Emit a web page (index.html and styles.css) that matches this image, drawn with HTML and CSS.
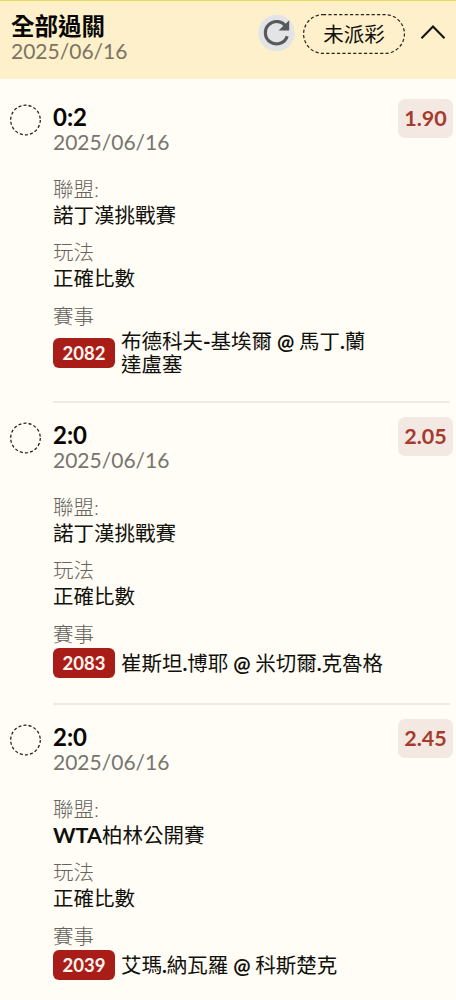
FILE: index.html
```html
<!DOCTYPE html>
<html lang="zh-Hant">
<head>
<meta charset="utf-8">
<title>全部過關</title>
<link rel="stylesheet" href="styles.css">
</head>
<body>
<header class="header">
  <div class="header-text">
    <h1 class="title">全部過關</h1>
    <div class="date">2025/06/16</div>
  </div>
  <button class="refresh" aria-label="重新整理">
    <svg width="37" height="38" viewBox="0 0 37 38"><circle cx="18.5" cy="19" r="18.3" fill="#e3e4e6"/><path d="M28.3 13.2A11.2 11.2 0 1 0 29.2 22.2" fill="none" stroke="#58595b" stroke-width="3.2"/><path d="M31.2 6.2V16.6H20.6Z" fill="#58595b"/></svg>
  </button>
  <div class="status"><svg class="outline" width="102" height="40"><rect x=".6" y=".6" width="100.8" height="38.8" rx="19.4" fill="none" stroke="#29251b" stroke-width="1.2" stroke-dasharray="3.2 2.2"/></svg><span>未派彩</span></div>
  <svg class="chevron" width="26" height="16" viewBox="0 0 26 16"><path d="M1.5 14.2 13 2.4 24.5 14.2" fill="none" stroke="#171510" stroke-width="2.1"/></svg>
</header>
<main class="bets">
  <section class="bet">
    <svg class="radio" width="31" height="32"><circle cx="15.5" cy="16" r="14.8" fill="none" stroke="#29251b" stroke-width="1.3" stroke-dasharray="3.05 2.12"/></svg>
    <div class="body">
      <div class="top"><div><h2 class="pick">0:2</h2><div class="date">2025/06/16</div></div><div class="odds">1.90</div></div>
      <dl class="facts">
        <div class="fact"><dt>聯盟:</dt><dd>諾丁漢挑戰賽</dd></div>
        <div class="fact"><dt>玩法</dt><dd>正確比數</dd></div>
        <div class="fact"><dt>賽事</dt><dd class="match"><span class="code">2082</span><span class="teams">布德科夫<b>-</b>基埃爾<b> @ </b>馬丁<b>.</b>蘭<br>達盧塞</span></dd></div>
      </dl>
    </div>
  </section>
  <section class="bet">
    <svg class="radio" width="31" height="32"><circle cx="15.5" cy="16" r="14.8" fill="none" stroke="#29251b" stroke-width="1.3" stroke-dasharray="3.05 2.12"/></svg>
    <div class="body">
      <div class="top"><div><h2 class="pick">2:0</h2><div class="date">2025/06/16</div></div><div class="odds">2.05</div></div>
      <dl class="facts">
        <div class="fact"><dt>聯盟:</dt><dd>諾丁漢挑戰賽</dd></div>
        <div class="fact"><dt>玩法</dt><dd>正確比數</dd></div>
        <div class="fact"><dt>賽事</dt><dd class="match"><span class="code">2083</span><span class="teams">崔斯坦<b>.</b>博耶<b> @ </b>米切爾<b>.</b>克魯格</span></dd></div>
      </dl>
    </div>
  </section>
  <section class="bet">
    <svg class="radio" width="31" height="32"><circle cx="15.5" cy="16" r="14.8" fill="none" stroke="#29251b" stroke-width="1.3" stroke-dasharray="3.05 2.12"/></svg>
    <div class="body">
      <div class="top"><div><h2 class="pick">2:0</h2><div class="date">2025/06/16</div></div><div class="odds">2.45</div></div>
      <dl class="facts">
        <div class="fact"><dt>聯盟:</dt><dd><b class="tour">WTA</b>柏林公開賽</dd></div>
        <div class="fact"><dt>玩法</dt><dd>正確比數</dd></div>
        <div class="fact"><dt>賽事</dt><dd class="match"><span class="code">2039</span><span class="teams">艾瑪<b>.</b>納瓦羅<b> @ </b>科斯楚克</span></dd></div>
      </dl>
    </div>
  </section>
</main>
</body>
</html>
```
FILE: styles.css
```css
* { box-sizing: border-box; margin: 0; padding: 0; }

body {
  height: 1000px;
  overflow: hidden;
  background: #fffdf5;
  color: #11100c;
  font: 400 20.5px/26px Lato, "Noto Sans CJK TC", sans-serif;
}

.header {
  display: flex;
  align-items: flex-start;
  height: 79px;
  padding: 13px 10px 0 11px;
  border-top: 1px solid #e8d858;
  background: #fdf0cb;
}

.header-text { flex: 1; }
.title { font-size: 23.5px; line-height: 25px; font-weight: 700; color: #080705; }
.date { margin-top: -1px; font-size: 21px; line-height: 25px; color: #777570; white-space: nowrap; }
.header .date { color: #7c7462; }

.refresh { width: 37px; height: 38px; border: 0; background: none; }
.refresh svg { display: block; }

.status {
  position: relative;
  width: 102px;
  height: 40px;
  margin-left: 8px;
  line-height: 40px;
  text-align: center;
}
.outline { position: absolute; inset: 0; }
.chevron { margin: 10px 0 0 15px; }

.bets { padding: 5px 6px 0 9px; }
.bet { display: flex; }
.radio { flex: none; margin: 20px 12px 0 1px; }
.bet + .bet .radio { margin-top: 21px; }
.body { flex: 1; padding: 20px 0 25px; }
.bet + .bet .body { border-top: 2px solid #eeeae6; padding-top: 19px; }

.top { display: flex; justify-content: space-between; align-items: flex-start; height: 51px; }
.pick { font-size: 24px; line-height: 26px; font-weight: 700; color: #080705; }

.odds {
  width: 55px;
  height: 39px;
  margin: -5px -3px 0 0;
  border-radius: 7px;
  background: #f4e8e3;
  color: #a63a2d;
  font-size: 21.5px;
  line-height: 38px;
  font-weight: 700;
  text-align: center;
}

.facts { margin-top: 21px; }
.fact + .fact { margin-top: 11px; }
.fact:last-child { margin-top: 12px; }
dt { color: #66645f; font-weight: 300; }
b { font-weight: 700; }
.tour { font-size: 21.5px; line-height: 20px; }

.match { display: flex; align-items: center; margin-top: 1px; }
.code {
  width: 62px;
  height: 30px;
  margin-right: 6px;
  border-radius: 6px;
  background: #a91d18;
  color: #fff5ee;
  font-size: 18.5px;
  line-height: 30px;
  font-weight: 700;
  text-align: center;
}
.teams { line-height: 23px; white-space: nowrap; }
.teams b { letter-spacing: -.1px; }
```
